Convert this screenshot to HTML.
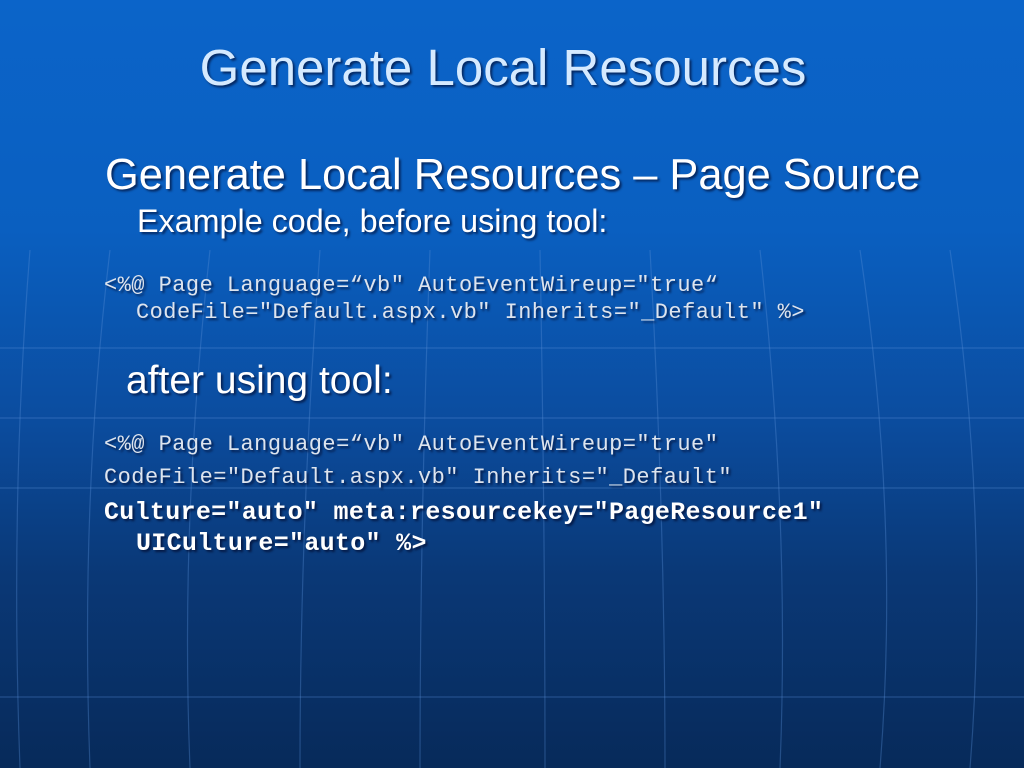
<!DOCTYPE html>
<html><head><style>
html,body{margin:0;padding:0}
body{width:1024px;height:768px;overflow:hidden;position:relative;
background:linear-gradient(180deg,#0b64c9 0%,#0a5fc0 30%,#0b4c9e 55%,#0a3876 75%,#072a5a 100%);
font-family:"Liberation Sans",sans-serif;}
svg{position:absolute;left:0;top:0}
.t{position:absolute;white-space:nowrap;text-shadow:2px 2px 2px rgba(0,0,30,0.6);line-height:1}
.m{font-family:"Liberation Mono",monospace;font-size:22px;color:#dde4ee;letter-spacing:0.45px}
.b{font-weight:bold;color:#fff;font-size:25px;letter-spacing:0.3px}
</style></head><body>
<svg width="1024" height="768" viewBox="0 0 1024 768">
<g stroke="#5a8fd6" stroke-opacity="0.35" fill="none" stroke-width="1.2">
<line x1="0" y1="348" x2="1024" y2="348"/>
<line x1="0" y1="418" x2="1024" y2="418"/>
<line x1="0" y1="488" x2="1024" y2="488"/>
<line x1="0" y1="697" x2="1024" y2="697"/>
<path d="M30 250 Q10 500 20 768"/>
<path d="M110 250 Q80 500 90 768"/>
<path d="M210 250 Q180 520 190 768"/>
<path d="M320 250 Q300 520 300 768"/>
<path d="M430 250 Q420 520 420 768"/>
<path d="M540 250 Q545 520 545 768"/>
<path d="M650 250 Q665 520 665 768"/>
<path d="M760 250 Q790 520 780 768"/>
<path d="M860 250 Q900 520 880 768"/>
<path d="M950 250 Q990 520 970 768"/>
</g>
</svg>
<div class="t" style="left:0;width:1006px;text-align:center;top:42px;font-size:51px;color:#d5eaff">Generate Local Resources</div>
<div class="t" style="left:105px;top:154px;font-size:43.4px;color:#fff">Generate Local Resources – Page Source</div>
<div class="t" style="left:137px;top:205px;font-size:32.3px;color:#fff">Example code, before using tool:</div>
<div class="t m" style="left:104px;top:275px">&lt;%@ Page Language=“vb" AutoEventWireup="true“</div>
<div class="t m" style="left:136px;top:302px">CodeFile="Default.aspx.vb" Inherits="_Default" %&gt;</div>
<div class="t" style="left:126px;top:361px;font-size:39px;color:#fff">after using tool:</div>
<div class="t m" style="left:104px;top:434px">&lt;%@ Page Language=“vb" AutoEventWireup="true"</div>
<div class="t m" style="left:104px;top:467px">CodeFile="Default.aspx.vb" Inherits="_Default"</div>
<div class="t m b" style="left:104px;top:500px">Culture="auto" meta:resourcekey="PageResource1"</div>
<div class="t m b" style="left:136px;top:531px">UICulture="auto" %&gt;</div>
</body></html>
